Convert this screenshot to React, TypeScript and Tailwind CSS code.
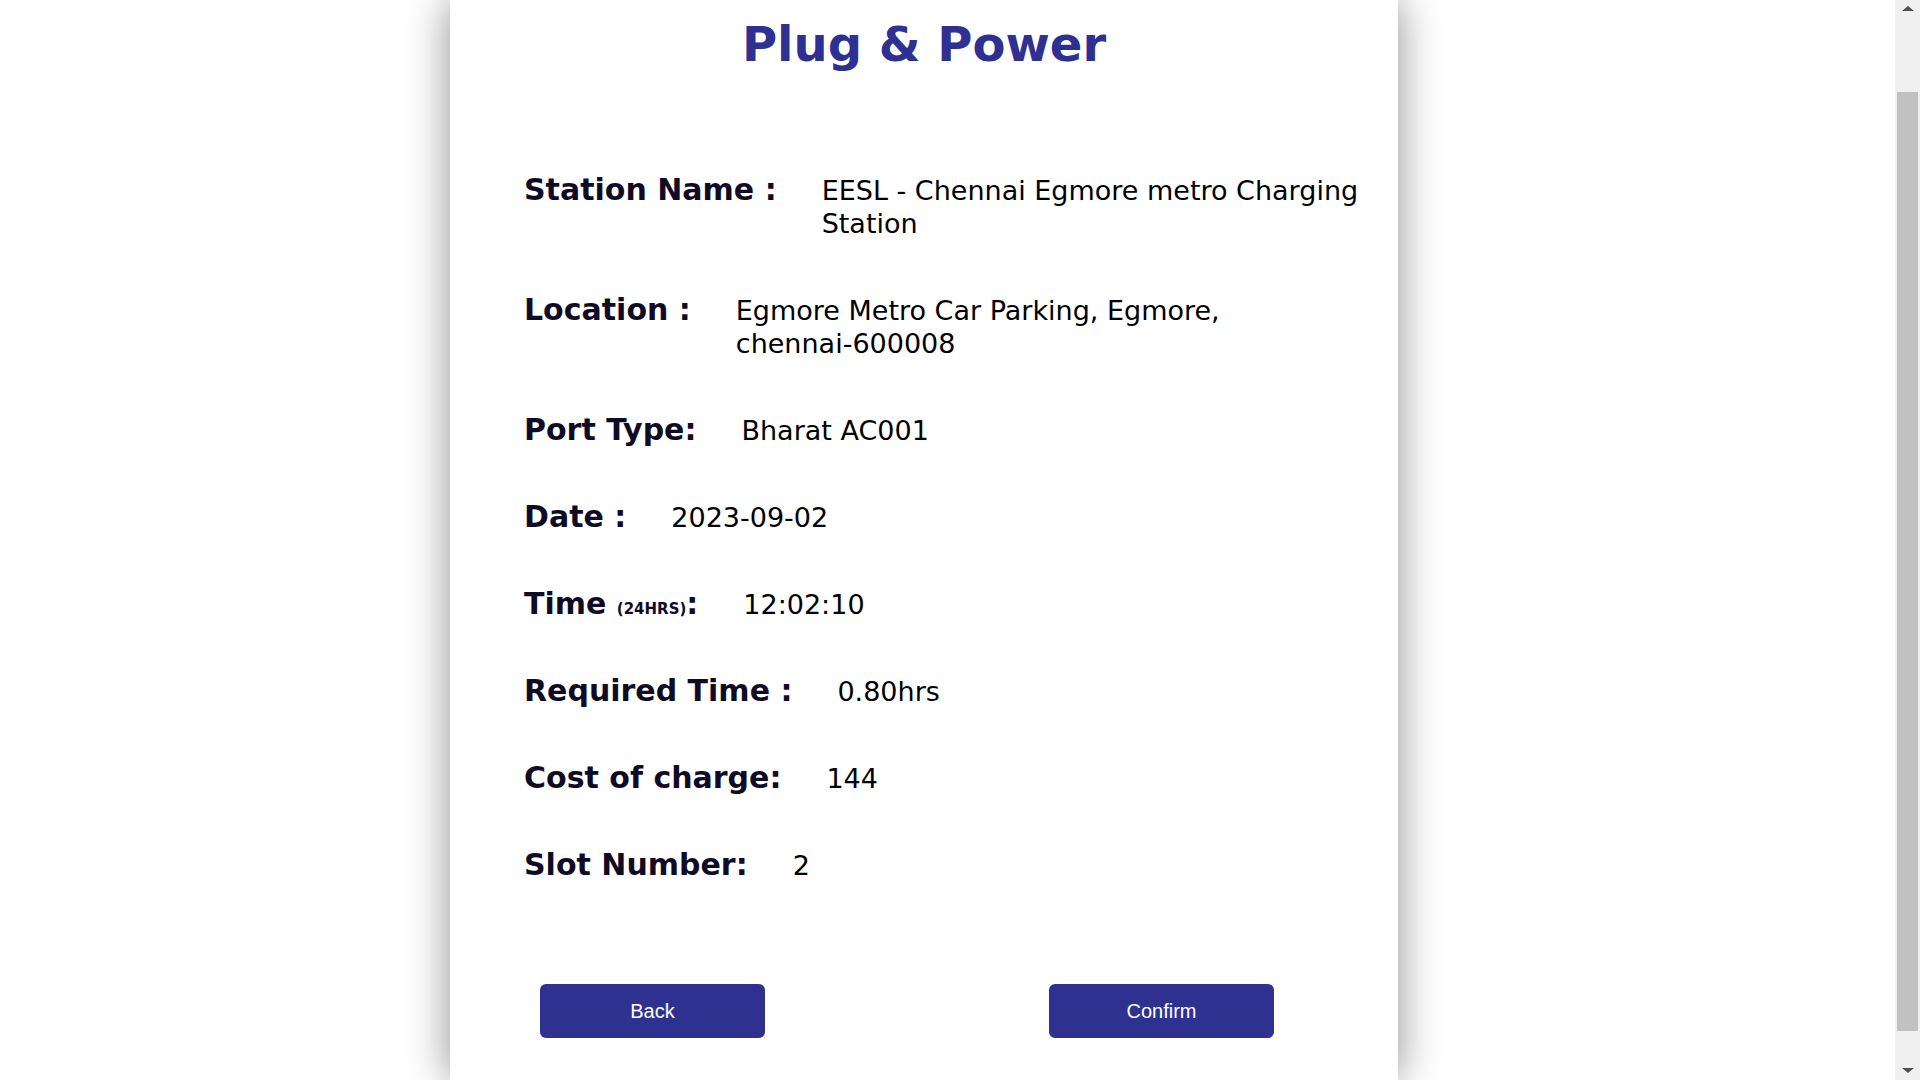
import type { ReactNode } from 'react'

interface DetailRowProps {
  label: ReactNode
  value: ReactNode
}

function DetailRow({ label, value }: DetailRowProps) {
  return (
    <div className="flex items-baseline mb-[53px]">
      <span className="shrink-0 text-[30px] leading-[33px] font-bold text-[#0f0b24]">{label}</span>
      <span className="ml-[45px] text-[27px] leading-[33px] text-black">{value}</span>
    </div>
  )
}

const details: DetailRowProps[] = [
  { label: 'Station Name :', value: 'EESL - Chennai Egmore metro Charging Station' },
  {
    label: 'Location :',
    value: (
      <>
        Egmore Metro Car Parking, Egmore, <span className="whitespace-nowrap">chennai-600008</span>
      </>
    ),
  },
  { label: 'Port Type:', value: 'Bharat AC001' },
  { label: 'Date :', value: '2023-09-02' },
  {
    label: (
      <>
        Time <span className="text-[15px] leading-none">(24HRS)</span>:
      </>
    ),
    value: '12:02:10',
  },
  { label: 'Required Time :', value: '0.80hrs' },
  { label: 'Cost of charge:', value: '144' },
  { label: 'Slot Number:', value: '2' },
]

function Scrollbar() {
  return (
    <div className="w-[25px] h-full bg-[#f0f0f0] flex flex-col items-center shrink-0">
      <div className="h-[25px] w-full flex items-center justify-center">
        <div className="w-0 h-0 border-l-[6px] border-r-[6px] border-b-[5px] border-l-transparent border-r-transparent border-b-[#505050] -mt-[8px]" />
      </div>
      <div className="mt-[67px] w-[21px] h-[939px] bg-[#c1c1c1]" />
      <div className="flex-1 w-full flex items-end justify-center pb-[7px]">
        <div className="w-0 h-0 border-l-[6px] border-r-[6px] border-t-[5px] border-l-transparent border-r-transparent border-t-[#505050]" />
      </div>
    </div>
  )
}

export default function App() {
  return (
    <div className="flex w-full h-screen overflow-hidden bg-white font-['DejaVu_Sans','Verdana',sans-serif]">
      <div className="flex-1 h-full">
        <div className="ml-[450px] w-[948px] h-full bg-white shadow-[0_0_40px_rgba(0,0,0,0.45)] pl-[74px] pr-[8px] pt-[16px]">
          <h1 className="text-center text-[48px] leading-[56px] font-bold text-[#2e3192] -ml-[66px]">
            Plug &amp; Power
          </h1>

          <div className="mt-[101px]">
            {details.map((row, i) => (
              <DetailRow key={i} label={row.label} value={row.value} />
            ))}
          </div>

          <div className="flex mt-[102px] pl-[16px] font-['Liberation_Sans',Arial,sans-serif]">
            <button className="w-[225px] h-[54px] rounded-[6px] bg-[#2e3190] text-white text-[20px]">
              Back
            </button>
            <button className="ml-[284px] w-[225px] h-[54px] rounded-[6px] bg-[#2e3190] text-white text-[20px]">
              Confirm
            </button>
          </div>
        </div>
      </div>
      <Scrollbar />
    </div>
  )
}
